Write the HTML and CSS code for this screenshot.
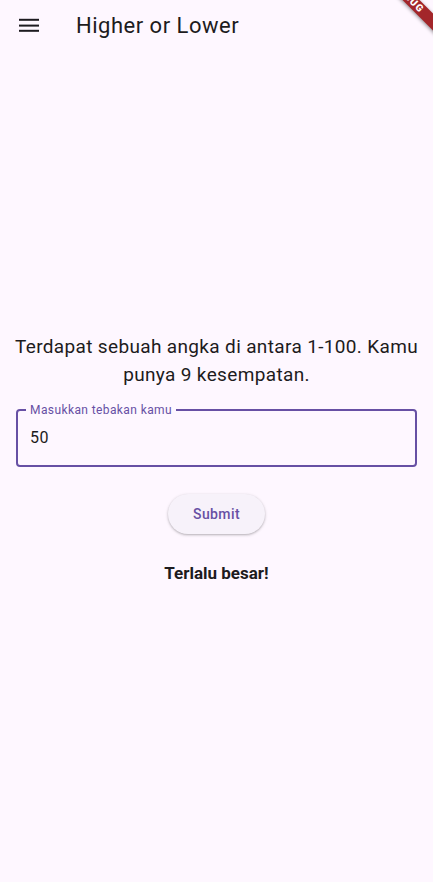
FILE: index.html
```html
<!DOCTYPE html>
<html>
<head>
<meta charset="utf-8">
<link rel="stylesheet" href="styles.css">
</head>
<body>
<div class="app">
  <header class="appbar">
    <button class="menu" aria-label="menu">
      <svg width="24" height="24" viewBox="0 0 24 24"><rect x="2" y="4.8" width="20" height="2" fill="#1d1b20"/><rect x="2" y="10.6" width="20" height="2" fill="#1d1b20"/><rect x="2" y="15.8" width="20" height="2" fill="#1d1b20"/></svg>
    </button>
    <h1 class="title">Higher or Lower</h1>
  </header>
  <main class="body">
    <div class="column">
      <p class="info">Terdapat sebuah angka di antara 1-100. Kamu punya 9 kesempatan.</p>
      <div class="field">
        <span class="label">Masukkan tebakan kamu</span>
        <span class="value">50</span>
      </div>
      <button class="submit">Submit</button>
      <p class="result">Terlalu besar!</p>
    </div>
  </main>
  <div class="banner">DEBUG</div>
</div>
</body>
</html>
```
FILE: styles.css
```css
html, body {
  margin: 0;
  padding: 0;
}
body {
  background: #fef7ff;
  font-family: Roboto, "Noto Sans", sans-serif;
  color: #1d1b20;
}
.app {
  position: relative;
  width: 433px;
  height: 882px;
  overflow: hidden;
  display: flex;
  flex-direction: column;
}
.appbar {
  box-sizing: border-box;
  height: 56px;
  display: flex;
  align-items: center;
  padding: 0 0 4px 5px;
  flex-shrink: 0;
}
.menu {
  width: 48px;
  height: 48px;
  border: 0;
  background: none;
  padding: 0;
  display: flex;
  align-items: center;
  justify-content: center;
}
.title {
  margin: 0 0 0 23px;
  font-size: 22px;
  font-weight: 400;
  line-height: 28px;
  letter-spacing: 0.5px;
  color: #1d1b20;
}
.body {
  flex: 1;
  display: flex;
  align-items: center;
  justify-content: center;
  padding: 0 16px 20px;
}
.column {
  width: 100%;
  display: flex;
  flex-direction: column;
  align-items: center;
}
.info {
  margin: 0 -12px;
  align-self: stretch;
  text-align: center;
  font-size: 19px;
  line-height: 28px;
  letter-spacing: 0.35px;
}
.field {
  position: relative;
  box-sizing: border-box;
  width: 401px;
  height: 58px;
  margin-top: 20px;
  border: 2px solid #6750a4;
  border-radius: 4px;
  display: flex;
  align-items: center;
  padding: 0 12px;
}
.label {
  position: absolute;
  left: 8px;
  top: -9px;
  padding: 0 4px;
  background: #fef7ff;
  font-size: 12px;
  line-height: 16px;
  letter-spacing: 0.4px;
  color: #6750a4;
}
.value {
  font-size: 16px;
  line-height: 24px;
  letter-spacing: 0.5px;
  color: #1d1b20;
}
.submit {
  margin-top: 27px;
  height: 40px;
  padding: 0 25px;
  border: 0;
  border-radius: 20px;
  background: #f7f2fa;
  color: #6750a4;
  font-family: Roboto, sans-serif;
  font-size: 14px;
  font-weight: 500;
  letter-spacing: 0.4px;
  box-shadow: 0 1px 2px rgba(0,0,0,0.2), 0 1px 3px 1px rgba(0,0,0,0.08);
}
.result {
  margin: 27px 0 0;
  font-size: 17px;
  font-weight: 700;
  line-height: 24px;
}
.banner {
  position: absolute;
  top: -8px;
  right: -26px;
  width: 100px;
  height: 12px;
  transform: rotate(45deg);
  transform-origin: center;
  background: #a3262a;
  color: #fff;
  font-size: 10px;
  font-weight: 900;
  line-height: 12px;
  text-align: center;
  letter-spacing: 1px;
  box-shadow: 0 1px 4px rgba(0,0,0,0.45);
}
```
